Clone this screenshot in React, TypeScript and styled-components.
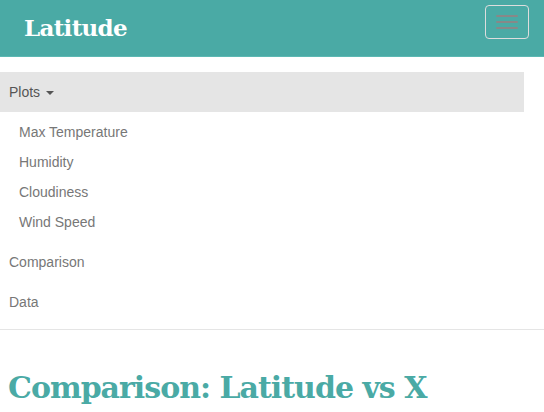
import React from "react";
import styled, { createGlobalStyle } from "styled-components";

const Global = createGlobalStyle`
  html, body { margin: 0; padding: 0; background: #fff; }
  body { font-family: "Liberation Sans", Arial, sans-serif; font-size: 14px; line-height: 20px; color: #333; }
  * { box-sizing: border-box; }
`;

const Header = styled.header`
  height: 57px;
  background: #4aaaa5;
  border-bottom: 1px solid #5cb8b3;
  display: flex;
  align-items: flex-start;
  justify-content: space-between;
  padding: 0 15px 0 24px;
`;

const Brand = styled.a`
  font-family: "DejaVu Serif", Georgia, serif;
  font-weight: bold;
  font-size: 23px;
  line-height: 24px;
  color: #fff;
  margin-top: 16px;
  text-decoration: none;
  letter-spacing: -0.7px;
`;

const Toggle = styled.button`
  margin-top: 5px;
  width: 44px;
  height: 34px;
  border: 1px solid #ddd;
  border-radius: 4px;
  background: transparent;
  display: flex;
  flex-direction: column;
  align-items: center;
  justify-content: center;
  gap: 4px;
  padding: 0;
`;

const Bar = styled.span`
  display: block;
  width: 22px;
  height: 2px;
  background: #888;
  border-radius: 1px;
`;

const Nav = styled.ul`
  list-style: none;
  margin: 15px 20px 7px 0;
  padding: 0;
`;

const NavLink = styled.a<{ $open?: boolean }>`
  display: block;
  padding: 10px 9px;
  line-height: 20px;
  color: ${(p) => (p.$open ? "#555" : "#777")};
  background: ${(p) => (p.$open ? "#e5e5e5" : "transparent")};
  text-decoration: none;
`;

const Caret = styled.span`
  display: inline-block;
  width: 0;
  height: 0;
  margin-left: 6px;
  vertical-align: middle;
  border-top: 4px solid #555;
  border-left: 4px solid transparent;
  border-right: 4px solid transparent;
`;

const SubMenu = styled.ul`
  list-style: none;
  margin: 0;
  padding: 5px 0;
`;

const SubLink = styled.a`
  display: block;
  padding: 5px 15px 5px 19px;
  line-height: 20px;
  color: #777;
  text-decoration: none;
`;

const Rule = styled.hr`
  margin: 0;
  border: 0;
  border-top: 1px solid #e5e5e5;
`;

const Title = styled.h1`
  margin: 38px 0 0 8px;
  font-family: "DejaVu Serif", Georgia, serif;
  font-weight: bold;
  font-size: 30px;
  line-height: 40px;
  color: #4aaaa5;
  letter-spacing: -1px;
`;

export default function App() {
  return (
    <>
      <Global />
      <Header>
        <Brand href="#">Latitude</Brand>
        <Toggle aria-label="Toggle navigation">
          <Bar />
          <Bar />
          <Bar />
        </Toggle>
      </Header>
      <Nav>
        <li>
          <NavLink href="#" $open>
            Plots<Caret />
          </NavLink>
          <SubMenu>
            {["Max Temperature", "Humidity", "Cloudiness", "Wind Speed"].map((t) => (
              <li key={t}>
                <SubLink href="#">{t}</SubLink>
              </li>
            ))}
          </SubMenu>
        </li>
        <li>
          <NavLink href="#">Comparison</NavLink>
        </li>
        <li>
          <NavLink href="#">Data</NavLink>
        </li>
      </Nav>
      <Rule />
      <Title>Comparison: Latitude vs X</Title>
    </>
  );
}
